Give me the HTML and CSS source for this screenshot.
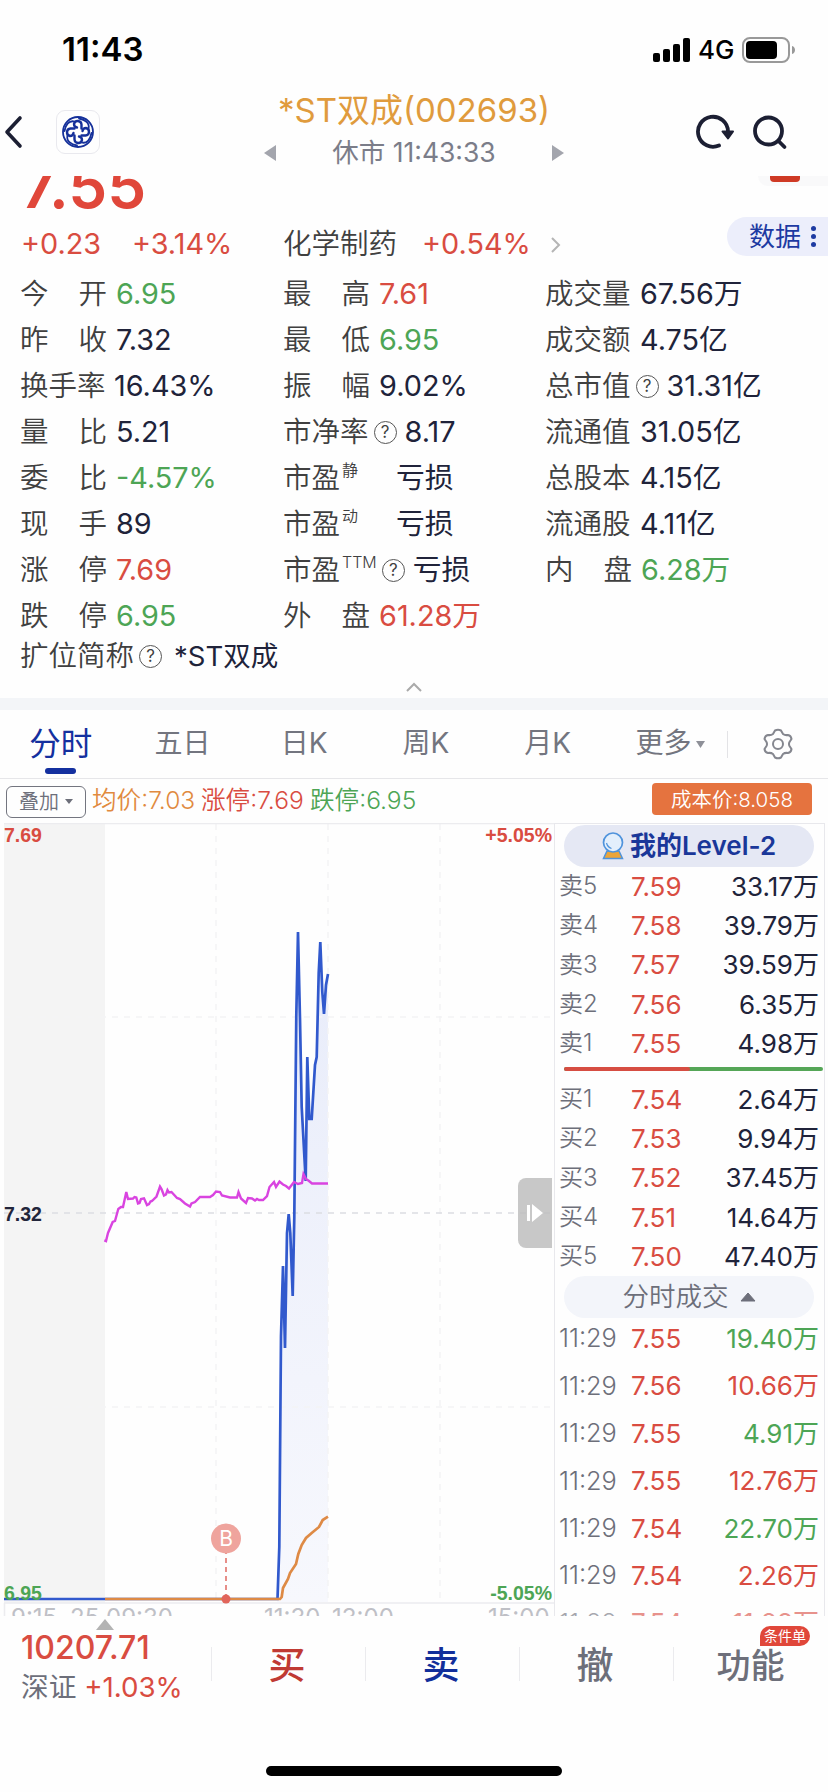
FILE: index.html
```html
<!DOCTYPE html>
<html lang="zh-CN">
<head>
    <meta charset="UTF-8">
    <meta name="viewport" content="width=device-width, initial-scale=1.0">
    <title>*ST双成(002693)</title>
    <link rel="stylesheet" href="styles.css">
</head>
<body>
    <div class="status">
        <span class="time">11:43</span>
        <div class="status-right">
            <svg width="38" height="24" viewBox="0 0 38 24">
                <rect x="0" y="15" width="7" height="9" rx="2"/>
                <rect x="10" y="11" width="7" height="13" rx="2"/>
                <rect x="20" y="6" width="7" height="18" rx="2"/>
                <rect x="30" y="0" width="7" height="24" rx="2"/>
            </svg>
            <span class="net">4G</span>
            <svg width="54" height="26" viewBox="0 0 54 26">
                <rect x="1" y="1" width="46" height="24" rx="7" fill="none" stroke="#999" stroke-width="2"/>
                <rect x="4" y="4" width="31" height="18" rx="4"/>
                <path d="M50 9c4 1 4 7 0 8z" fill="#999"/>
            </svg>
        </div>
    </div>

    <div class="nav">
        <svg class="back" width="20" height="34" viewBox="0 0 20 34"><path d="M17 3L4 17l13 14" fill="none" stroke="#1c1f33" stroke-width="3.6" stroke-linecap="round" stroke-linejoin="round"/></svg>
        <div class="logo">
            <svg width="34" height="34" viewBox="-17 -17 34 34" fill="none" stroke="#15309a" stroke-width="2.4" stroke-linecap="round">
                <circle r="15" stroke-width="1.8"/>
                <g id="petal"><path d="M3.500 -3.500V-7.500A3.800 3.800 0 0 0-4 -8Q-4 -5-1 -4.500"/><path d="M-3.500 -10.500C-9 -12-12.500 -7-13.500 -1" stroke-width="1.800"/></g>
                <use href="#petal" transform="rotate(90)"/>
                <use href="#petal" transform="rotate(180)"/>
                <use href="#petal" transform="rotate(270)"/>
            </svg>
        </div>
        <div class="title">
            <h1>*ST双成(002693)</h1>
            <div class="sub">
                <svg width="12" height="16"><path d="M12 0v16L0 8z" fill="#a3a5ad"/></svg>
                <span>休市 11:43:33</span>
                <svg width="12" height="16"><path d="M0 0v16l12-8z" fill="#a3a5ad"/></svg>
            </div>
        </div>
        <div class="tools">
            <svg width="40" height="36" viewBox="0 0 40 36"><path d="M24 31.500A15 15 0 1 1 33 17.500" fill="none" stroke="#1c1f33" stroke-width="3.800" stroke-linecap="round"/><path d="M27.500 17.500h10.500l-5 7z" fill="#1c1f33" stroke="#1c1f33" stroke-width="2" stroke-linejoin="round"/></svg>
            <svg width="36" height="36" viewBox="0 0 36 36" fill="none" stroke="#1c1f33" stroke-width="3.800" stroke-linecap="round"><circle cx="16.500" cy="17" r="13.500"/><path d="M26.500 27l6 6"/></svg>
        </div>
    </div>

    <div class="quote">
        <div class="quote-top">
            <div class="price">7.55</div>
            <div class="corner"><i></i></div>
        </div>
        <div class="change">
            <span class="red c1">+0.23</span>
            <span class="red c2">+3.14%</span>
            <span class="industry">化学制药</span>
            <span class="red c3">+0.54%</span>
            <svg width="10" height="18" viewBox="0 0 10 18"><path d="M1 2l7 7-7 7" fill="none" stroke="#b5b5b5" stroke-width="2"/></svg>
            <div class="data-btn">数据<i></i></div>
        </div>
        <div class="grid">
            <dl>
                <div><dt>今<b></b>开</dt><dd class="green">6.95</dd></div>
                <div><dt>昨<b></b>收</dt><dd>7.32</dd></div>
                <div><dt>换手率</dt><dd class="near">16.43%</dd></div>
                <div><dt>量<b></b>比</dt><dd>5.21</dd></div>
                <div><dt>委<b></b>比</dt><dd class="green">-4.57%</dd></div>
                <div><dt>现<b></b>手</dt><dd>89</dd></div>
                <div><dt>涨<b></b>停</dt><dd class="red">7.69</dd></div>
                <div><dt>跌<b></b>停</dt><dd class="green">6.95</dd></div>
            </dl>
            <dl>
                <div><dt>最<b></b>高</dt><dd class="red">7.61</dd></div>
                <div><dt>最<b></b>低</dt><dd class="green">6.95</dd></div>
                <div><dt>振<b></b>幅</dt><dd>9.02%</dd></div>
                <div><dt>市净率<em>?</em></dt><dd class="near">8.17</dd></div>
                <div><dt class="pe">市盈<sup>静</sup></dt><dd>亏损</dd></div>
                <div><dt class="pe">市盈<sup>动</sup></dt><dd>亏损</dd></div>
                <div><dt>市盈<sup>TTM</sup><em>?</em></dt><dd class="near">亏损</dd></div>
                <div><dt>外<b></b>盘</dt><dd class="red">61.28万</dd></div>
            </dl>
            <dl>
                <div><dt>成交量</dt><dd>67.56万</dd></div>
                <div><dt>成交额</dt><dd>4.75亿</dd></div>
                <div><dt>总市值<em>?</em></dt><dd class="near">31.31亿</dd></div>
                <div><dt>流通值</dt><dd>31.05亿</dd></div>
                <div><dt>总股本</dt><dd>4.15亿</dd></div>
                <div><dt>流通股</dt><dd>4.11亿</dd></div>
                <div><dt>内<b></b>盘</dt><dd class="green">6.28万</dd></div>
            </dl>
        </div>
        <div class="full-name">扩位简称<em>?</em><span>*ST双成</span></div>
        <svg class="fold" width="18" height="10" viewBox="0 0 18 10"><path d="M2 9l7-7 7 7" fill="none" stroke="#aaa" stroke-width="2"/></svg>
    </div>

    <div class="tabs">
        <a class="active">分时</a>
        <a>五日</a>
        <a>日K</a>
        <a>周K</a>
        <a>月K</a>
        <a class="more">更多<svg width="9" height="7"><path d="M0 0h9L4.500 7z" fill="#8e9098"/></svg></a>
        <svg class="gear" width="32" height="32" viewBox="-16 -16 32 32" fill="none" stroke="#85878f" stroke-width="2" stroke-linejoin="round"><circle r="5"/><path d="M-3-13.500Q0-15 3-13.500L5-10Q7-8.500 10-9Q13-8.500 13.500-5L11.500-2Q10.500 0 11.500 2L13.500 5Q13 8.500 10 9Q7 8.500 5 10L3 13.500Q0 15-3 13.500L-5 10Q-7 8.500-10 9Q-13 8.500-13.500 5L-11.500 2Q-10.500 0-11.500-2L-13.500-5Q-13-8.500-10-9Q-7-8.500-5-10Z"/></svg>
    </div>

    <div class="legend">
        <div class="overlay-btn">叠加<svg width="8" height="5"><path d="M0 0h8L4 5z" fill="#6d6f7a"/></svg></div>
        <span class="orange">均价:7.03</span>
        <span class="red">涨停:7.69</span>
        <span class="green">跌停:6.95</span>
        <div class="cost">成本价:8.058</div>
    </div>

    <div class="main">
        <div class="chart">
            <svg width="554" height="793" viewBox="0 823 554 793">
                <defs>
                    <linearGradient id="area" x1="0" y1="0" x2="0" y2="1">
                        <stop offset="0" stop-color="#e8ecfa"/>
                        <stop offset="1" stop-color="#f7f8fd"/>
                    </linearGradient>
                </defs>
                <rect x="4" y="824" width="101" height="779" fill="#f4f4f4"/>
                <path d="M277.700 1598L279.300 1547 281 1336 283 1266 285 1348 287 1233 288.700 1214 290.300 1233 292.700 1296 294.300 1217 296.300 1015 298 932 300 1019 301.700 1107 305.700 1181 307.300 1057 309.300 1119H311.700L315 1065 316.700 1057 318.700 973 320.300 942 322.300 992 324 1014 326 985 328 974V1602H277z" fill="url(#area)"/>
                <path class="dash" d="M216 824V1602M328 824V1602M440 824V1602M4 1017H552M4 1407H552"/>
                <path class="dash mid" d="M4 1213H552"/>
                <path d="M4 823.500H554M4 1603H554M4.500 1603V1616" stroke="#ececef" fill="none" stroke-width="1.500"/>
                <path class="line" stroke="#3159cd" d="M4 1599H277.500L279.300 1547 281 1336 283 1266 285 1348 287 1233 288.700 1214 290.300 1233 292.700 1296 294.300 1217 296.300 1015 298 932 300 1019 301.700 1107 305.700 1181 307.300 1057 309.300 1119H311.700L315 1065 316.700 1057 318.700 973 320.300 942 322.300 992 324 1014 326 985 328 974"/>
                <path class="line" stroke="#de8a45" d="M105 1599H280L281.700 1597 283 1588 288 1579 290 1573 296 1564 298.300 1554 301.700 1545 306 1538 311.700 1533 319 1527 322.700 1520 328 1516.600"/>
                <polyline class="line index-line" points="104.300,1240.300 106,1241 108,1233 112.700,1222 115,1221 118.300,1209 121,1207 123,1207 126.300,1192 128,1199 133,1198.500 134.500,1197 136.300,1197.500 138,1203.500 139.500,1203 141,1199 144,1198.300 147,1205 149,1204 150.500,1201.500 152,1201 156.500,1196.500 160,1186.500 161.500,1189 164,1195.500 166,1194.500 167.500,1190 169,1192.500 171.500,1192 177,1198 180,1199 185,1203.500 190,1206.500 191.500,1203.500 195,1202 200,1197 210,1197 213,1195 216,1191.500 220,1192 222,1195.500 230,1197.500 237,1197.500 238.500,1192 241,1198.500 246,1203 248,1198 252,1198.500 255,1200.500 257,1199 259,1200 263,1200 267,1196 269.500,1187 274,1182 276,1187 279.500,1181.500 283,1184.500 286,1186 289,1188.500 294,1182 298,1184 302,1183 303.500,1174 306,1179 309,1181 312,1183.500 328,1183.500"/>
                <path d="M226 1540V1599" stroke="#e78e88" stroke-width="2" stroke-dasharray="5 4"/>
                <circle cx="226" cy="1538.500" r="15" fill="#efa49d"/>
                <circle cx="226" cy="1599" r="4.500" fill="#e1655b"/>
                <text class="b" x="226" y="1546" text-anchor="middle">B</text>
                <text class="tag" x="4" y="842" fill="#d94c41">7.69</text>
                <text class="tag" x="552" y="842" fill="#d94c41" text-anchor="end">+5.05%</text>
                <text class="tag" x="4" y="1221" fill="#22253a">7.32</text>
                <text class="tag" x="4" y="1600" fill="#4da555">6.95</text>
                <text class="tag" x="552" y="1600" fill="#4da555" text-anchor="end">-5.05%</text>
                <g class="axis">
                    <text x="11" y="1626">9:15-</text>
                    <text x="70" y="1626">25</text>
                    <text x="106" y="1626">09:30</text>
                    <text x="264" y="1626">11:30</text>
                    <text x="332" y="1626">13:00</text>
                    <text x="488" y="1626">15:00</text>
                </g>
            </svg>
            <div class="handle"><svg width="18" height="18"><path d="M1 1h3v16H1zM6 0v18l11-9z" fill="#fff"/></svg></div>
        </div>
        <div class="book">
            <div class="pill level2">
                <svg width="22" height="28" viewBox="0 0 22 28"><path d="M5 19h12l3.500 7.500h-19z" fill="#eba53a" stroke="#4f93dc" stroke-width="1.500"/><circle cx="11" cy="10.500" r="9.500" fill="#e3effc" stroke="#4f93dc" stroke-width="1.700"/><path d="M4.500 11q1 4 5 5.500" fill="none" stroke="#4f93dc" stroke-width="1.200"/></svg>
                我的Level-2
            </div>
            <ul class="five">
                <li><span>卖5</span><b>7.59</b><i>33.17万</i></li>
                <li><span>卖4</span><b>7.58</b><i>39.79万</i></li>
                <li><span>卖3</span><b>7.57</b><i>39.59万</i></li>
                <li><span>卖2</span><b>7.56</b><i>6.35万</i></li>
                <li><span>卖1</span><b>7.55</b><i>4.98万</i></li>
            </ul>
            <div class="ratio"><i></i></div>
            <ul class="five">
                <li><span>买1</span><b>7.54</b><i>2.64万</i></li>
                <li><span>买2</span><b>7.53</b><i>9.94万</i></li>
                <li><span>买3</span><b>7.52</b><i>37.45万</i></li>
                <li><span>买4</span><b>7.51</b><i>14.64万</i></li>
                <li><span>买5</span><b>7.50</b><i>47.40万</i></li>
            </ul>
            <div class="pill deals">分时成交<svg width="16" height="11"><path d="M1 10h14L8 2z" fill="#6d6f7a" stroke="#6d6f7a" stroke-linejoin="round"/></svg></div>
            <ul class="ticks">
                <li><span>11:29</span><b>7.55</b><i class="green">19.40万</i></li>
                <li><span>11:29</span><b>7.56</b><i class="red">10.66万</i></li>
                <li><span>11:29</span><b>7.55</b><i class="green">4.91万</i></li>
                <li><span>11:29</span><b>7.55</b><i class="red">12.76万</i></li>
                <li><span>11:29</span><b>7.54</b><i class="green">22.70万</i></li>
                <li><span>11:29</span><b>7.54</b><i class="red">2.26万</i></li>
                <li class="fade"><span>11:29</span><b>7.54</b><i class="red">11.28万</i></li>
            </ul>
        </div>
    </div>

    <div class="bottom">
        <div class="index">
            <svg width="18" height="11"><path d="M9 0l9 11H0z" fill="#b3b3b3"/></svg>
            <strong>10207.71</strong>
            <p>深证 <span class="red">+1.03%</span></p>
        </div>
        <a class="buy">买</a>
        <a class="sell">卖</a>
        <a>撤</a>
        <a class="func">功能<i>条件单</i></a>
    </div>
    <div class="home"></div>
</body>
</html>
```
FILE: styles.css
```css
* {
    box-sizing: border-box;
}

body {
    margin: 0;
    width: 828px;
    height: 1792px;
    overflow: hidden;
    background: #fefefe;
    color: #20233a;
    font-family: Inter, "Noto Sans CJK SC", sans-serif;
    font-weight: 400;
    line-height: 1.2;
}

ul, dl, dd, h1, p {
    margin: 0;
    padding: 0;
    list-style: none;
}

i, em {
    font-style: normal;
}

svg {
    flex: none;
}

.red { color: #d94c41; }
.green { color: #4da555; }
.orange { color: #e18a3f; }

/* 状态栏 */
.status {
    display: flex;
    justify-content: space-between;
    align-items: center;
    height: 99px;
    padding: 0 32px 0 62px;
    color: #000;
}

.time {
    font-size: 33px;
    font-weight: 600;
}

.status-right {
    display: flex;
    align-items: center;
}

.net {
    width: 51px;
    padding-left: 7px;
    font-size: 26px;
    font-weight: 500;
}

/* 标题 */
.nav {
    display: flex;
    height: 77px;
    padding-left: 3px;
}

.back {
    margin-top: 16px;
}

.logo {
    display: flex;
    align-items: center;
    justify-content: center;
    width: 44px;
    height: 44px;
    margin: 11px 0 0 33px;
    border: 1.500px solid #e9e9ee;
    border-radius: 9px;
}

.title {
    width: 300px;
    margin-left: 164px;
}

.title h1 {
    margin-top: -9px;
    height: 40px;
    line-height: 40px;
    font-size: 33px;
    font-weight: 400;
    text-align: center;
    color: #e09b3d;
    white-space: nowrap;
}

.sub {
    display: flex;
    align-items: center;
    justify-content: space-between;
    height: 45px;
    font-size: 26.500px;
    color: #7b7d89;
}

.tools {
    display: flex;
    gap: 17px;
    margin: 15px 0 0 131px;
}

/* 报价 */
.quote {
    height: 534px;
    border-bottom: 12px solid #f3f5f8;
}

.quote-top {
    display: flex;
    justify-content: space-between;
    height: 41px;
    overflow: hidden;
}

.price {
    margin: -23px 0 0 21px;
    line-height: 66px;
    font-size: 62px;
    font-weight: 600;
    color: #e0473a;
}

.corner {
    width: 70px;
    height: 10px;
    padding-left: 12px;
    border-radius: 0 0 0 14px;
    background: #f9f9fa;
}

.corner i {
    display: block;
    width: 30px;
    height: 6px;
    border-radius: 0 0 4px 4px;
    background: #cf3a25;
}

.change {
    display: flex;
    align-items: center;
    height: 55px;
    margin-bottom: -1px;
    padding-left: 21px;
    font-size: 28.800px;
}

.c1 { width: 111px; }
.c2 { width: 151px; }
.c3 { width: 129px; }

.industry {
    width: 139px;
    font-size: 28.500px;
    font-weight: 350;
    color: #404040;
}

.data-btn {
    display: flex;
    align-items: center;
    width: 101px;
    height: 39px;
    margin: -16px 0 0 auto;
    padding-left: 22px;
    border-radius: 20px 0 0 20px;
    background: #eceefb;
    color: #1d3aa2;
    font-size: 26px;
}

.data-btn i {
    width: 5px;
    height: 5px;
    margin-left: 10px;
    border-radius: 50%;
    background: #1d3aa2;
    box-shadow: 0 -8px #1d3aa2, 0 8px #1d3aa2;
}

.grid {
    display: grid;
    grid-template-columns: 263px 262px 1fr;
    height: 368px;
    padding-left: 20px;
    font-size: 28.800px;
}

.grid div {
    display: flex;
    align-items: center;
    height: 46px;
}

dt, dd {
    display: flex;
    align-items: center;
}

dt, .full-name {
    font-size: 28.500px;
    font-weight: 350;
    color: #404040;
}

dt {
    min-width: 86px;
}

dt b {
    width: 30px;
}

dd {
    padding-left: 9px;
    white-space: nowrap;
}

dd.near {
    padding-left: 8px;
}

dt.pe {
    width: 104px;
}

sup {
    margin: -14px 0 0 2px;
    font-size: 16px;
}

em {
    display: flex;
    align-items: center;
    justify-content: center;
    width: 23px;
    height: 23px;
    margin-left: 5px;
    border: 1.500px solid #555;
    border-radius: 50%;
    font-size: 17px;
    font-weight: 400;
}

.full-name {
    display: flex;
    align-items: center;
    height: 34px;
    padding-left: 20px;
}

.full-name span {
    margin-left: 12px;
    font-size: 27.500px;
    font-weight: 400;
    color: #20233a;
}

.fold {
    display: block;
    margin: 9px auto 0;
}

/* 周期 */
.tabs {
    display: flex;
    align-items: center;
    height: 69px;
    border-bottom: 1px solid #e6e6e9;
    font-size: 28px;
    color: #73757f;
}

.tabs a {
    width: 121.700px;
    text-align: center;
    white-space: nowrap;
}

.tabs a.active {
    position: relative;
    font-size: 31.500px;
    color: #14309f;
}

.tabs .active::after {
    content: "";
    position: absolute;
    left: 45px;
    bottom: -11px;
    width: 31px;
    height: 6px;
    border-radius: 3px;
    background: #14309f;
}

.tabs .more {
    display: flex;
    align-items: center;
    width: 120px;
    height: 27px;
    padding-left: 27px;
    border-right: 1px solid #e3e3e6;
}

.more svg {
    margin-left: 5px;
}

.gear {
    margin-left: 34px;
}

.legend {
    display: flex;
    align-items: center;
    height: 44px;
    padding-left: 6px;
    font-size: 24.600px;
    font-weight: 350;
}

.legend > span {
    width: 109px;
    white-space: nowrap;
}

.overlay-btn {
    display: flex;
    align-items: center;
    width: 80px;
    height: 32px;
    margin: 1px 6px 0 0;
    padding-left: 12px;
    border: 1.500px solid #73757f;
    border-radius: 6px;
    font-size: 20px;
    color: #6d6f7a;
}

.overlay-btn svg {
    margin-left: 6px;
}

.cost {
    width: 160px;
    height: 32px;
    margin: -5px 16px 0 auto;
    border-radius: 4px;
    background: #e5733f;
    color: #fff;
    font-size: 20.500px;
    line-height: 33px;
    text-align: center;
}

/* 分时图 */
.main {
    display: flex;
    height: 793px;
    overflow: hidden;
}

.chart {
    position: relative;
    width: 554px;
}

.chart > svg {
    display: block;
}

.dash {
    fill: none;
    stroke: #f3f3f5;
    stroke-width: 1.500;
    stroke-dasharray: 6 6;
}

.dash.mid {
    stroke: #dcdde2;
}

.line {
    fill: none;
    stroke-width: 2.700;
}

.index-line {
    stroke: #d944e0;
    stroke-width: 2.400;
}

.tag {
    font: bold 19.500px "Liberation Sans", sans-serif;
}

.b {
    font-size: 21px;
    fill: #fff;
}

.axis {
    font-size: 24px;
    fill: #bfc0c6;
}

.handle {
    position: absolute;
    right: 2px;
    top: 355px;
    display: flex;
    align-items: center;
    justify-content: center;
    width: 34px;
    height: 70px;
    border-radius: 8px 0 0 8px;
    background: rgba(190, 190, 190, .85);
}

/* 五档 */
.book {
    width: 271px;
    border: 1.500px solid #e8e8ec;
    border-bottom: 0;
    font-size: 26px;
}

.pill {
    display: flex;
    align-items: center;
    justify-content: center;
    width: 250px;
    height: 42px;
    margin: 1px 0 0 9px;
    border-radius: 21px;
}

.level2 {
    gap: 6px;
    background: #e5e8f4;
    color: #1a3799;
    font-size: 26px;
    font-weight: 600;
}

.deals {
    gap: 11px;
    background: #f3f5fa;
    color: #6d6f7a;
    font-size: 26.500px;
    font-weight: 350;
}

.book li {
    display: flex;
    align-items: center;
    height: 39.200px;
    padding: 0 5px 0 4px;
}

.book .five + .deals {
    margin-top: 0;
}

.book span {
    width: 72px;
    font-size: 24px;
    font-weight: 350;
    color: #6d6f7a;
}

.book li b {
    font-weight: 400;
    color: #d94c41;
}

.book li i {
    margin-left: auto;
}

.ratio {
    height: 4px;
    margin: 4px 1px 9px 9px;
    border-radius: 2px;
    background: #55a657;
}

.ratio i {
    display: block;
    width: 48.500%;
    height: 4px;
    border-radius: 2px;
    background: #d64d42;
}

.ticks {
    margin-top: -3px;
}

.book .ticks li {
    height: 47.400px;
}

.book .ticks span {
    font-size: 25.300px;
}

.ticks .fade {
    opacity: .6;
}

/* 底部 */
.bottom {
    display: flex;
    align-items: center;
    height: 96px;
}

.index {
    width: 211px;
    padding-left: 21px;
}

.bottom .index svg {
    display: block;
    margin: -2px 0 0 75px;
}

.index strong {
    display: block;
    line-height: 36px;
    font-size: 32px;
    font-weight: 500;
    color: #d94c41;
}

.index p {
    line-height: 42px;
    font-size: 27.700px;
    color: #6d6f7a;
    white-space: nowrap;
}

.bottom a {
    position: relative;
    display: flex;
    align-items: center;
    justify-content: center;
    width: 154px;
    height: 34px;
    padding: 3px 3px 0 0;
    border-left: 1px solid #ebebee;
    font-size: 37px;
    font-weight: 500;
    line-height: 1;
    color: #6d6f7a;
}

.bottom .buy { color: #c03a33; }
.bottom .sell { color: #122f9b; }

.bottom .func {
    padding-right: 0;
    font-size: 34px;
}

.func i {
    position: absolute;
    left: 86px;
    top: -21px;
    width: 50px;
    height: 20px;
    border-radius: 10px 10px 10px 0;
    background: #e0473a;
    color: #fff;
    font-size: 14px;
    font-weight: 400;
    line-height: 20px;
    text-align: center;
}

.home {
    width: 296px;
    height: 10px;
    margin: 54px auto 0;
    border-radius: 5px;
    background: #000;
}
```
